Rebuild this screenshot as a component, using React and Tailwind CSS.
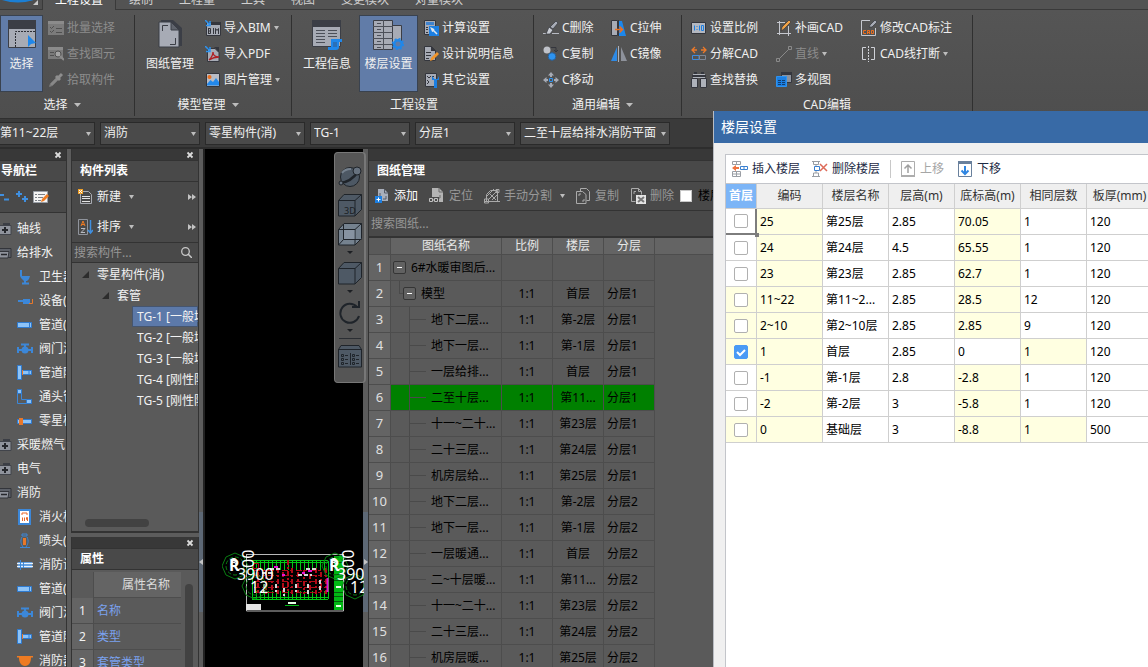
import React from 'react';

/* ---------- shared bits ---------- */

const Svg = ({ w = 16, h = 16, className = '', children }) => (
  <svg width={w} height={h} viewBox={`0 0 ${w} ${h}`} fill="none" aria-hidden="true" className={`block shrink-0 ${className}`}>
    {children}
  </svg>
);

const Caret = ({ size = 5, className = '' }) => (
  <svg width={size} height="4" viewBox="0 0 6 4" preserveAspectRatio="none" aria-hidden="true" className={`block shrink-0 ${className}`}>
    <path d="M0 0h6L3 4z" fill="#bdbdbd" />
  </svg>
);

const CloseIcon = () => (
  <Svg w={8} h={8}>
    <path d="M1.500 1.500l5 5M6.500 1.500l-5 5" stroke="#dcdcdc" strokeWidth="1.800" />
  </Svg>
);

/* ---------- ribbon icons ---------- */

const icons = {
  select: (
    <Svg w={28} h={28}>
      <path d="M.5.5h27v27H.5z" fill="#a7abb5" stroke="#3b3e46" />
      <path d="M0 0h28v9H0z" fill="#3b3e46" />
      <path d="M7.500 27V11.500H27" stroke="#2c2e35" strokeDasharray="2 1" />
      <path d="M20 15v12l3-3 5-1z" fill="#1f87ea" />
    </Svg>
  ),
  drawings: (
    <Svg w={24} h={28}>
      <path d="M3 0h12l9 8v18H7z" fill="#3b3e46" />
      <path d="M1 2h12l8 8v17H1z" fill="#a7abb5" stroke="#3b3e46" />
      <path d="M13 2v8h8z" fill="#60646d" stroke="#3b3e46" />
      <path d="M4.500 11V5.500H10M17.500 18v6.500H12" stroke="#3b3e46" />
    </Svg>
  ),
  info: (
    <Svg w={30} h={30}>
      <path d="M.5.5h28v26H.5z" fill="#a7abb5" stroke="#3b3e46" />
      <path d="M0 0h29v7H0z" fill="#3b3e46" />
      <path d="M4 10.500h9M16 10.500h9M4 13.500h9M16 13.500h9M4 16.500h9M16 16.500h9M4 19.500h9M4 22.500h9" stroke="#4c5059" />
      <path d="M19 19h11v3h-3v5c0 2-1 3-3 3h-8v-3h3z" fill="#1f87ea" />
      <path d="M21 22h4v5h-4z" fill="#2a70b8" />
    </Svg>
  ),
  floors: (
    <Svg w={31} h={30}>
      <path d="M19.500 5.500h9v20h-9z" fill="#a7abb5" stroke="#3b3e46" />
      <path d="M.5.5h19v29H.5z" fill="#a7abb5" stroke="#3b3e46" />
      <path d="M10.500 0v30M0 6.500h20M0 12.500h20M0 18.500h20M0 24.500h20M4 3.500h4M4 9.500h4M4 15.500h4M4 21.500h4M4 27.500h4" stroke="#4c5059" />
      <circle cx="25" cy="24" r="3.800" fill="#617ca8" stroke="#1f87ea" strokeWidth="2.600" />
      <circle cx="25" cy="24" r="5.400" stroke="#1f87ea" strokeWidth="1.400" strokeDasharray="2 2.240" />
    </Svg>
  ),
  batch: (
    <Svg>
      <path d="M0 1h16v14H0z" fill="#7b7b7b" />
      <path d="M2 7l1.500 1.500L6 6M2 11l1.500 1.500L6 10M8 8.500h6M8 12.500h6" stroke="#505050" />
      <path d="M0 1h16v3H0z" fill="#8b8b8b" />
    </Svg>
  ),
  find: (
    <Svg>
      <path d="M0 1h15v12H0z" fill="#7b7b7b" />
      <path d="M0 1h15v3H0z" fill="#8b8b8b" />
      <path d="M2 6.500h4M2 9.500h4" stroke="#505050" />
      <circle cx="10" cy="8" r="3" fill="#a4a4a4" stroke="#505050" />
      <path d="M12 10l4 4" stroke="#8b8b8b" strokeWidth="2" />
    </Svg>
  ),
  pick: (
    <Svg>
      <path d="M1.500 14.500l1-3L9 5l2 2-6.500 6.500z" fill="#888" stroke="#777" />
      <path d="M8 4l4 4M10 6l4-4" stroke="#8e8e8e" strokeWidth="3" />
    </Svg>
  ),
  bim: (
    <Svg>
      <path d="M1.500 2.500h14v13h-14z" fill="#a7abb5" stroke="#34363d" />
      <path d="M6 2h10v3H6z" fill="#34363d" />
      <path d="M3.500 14V8M3.500 8.500h2v5h-2M3.500 11h2M8.500 8v6M10.500 14V8.500l1.500 2 1.500-2V14" stroke="#34363d" />
      <path d="M0 0l5 5M5 1v4.500H1" stroke="#2d93f0" strokeWidth="1.500" />
    </Svg>
  ),
  pdf: (
    <Svg>
      <path d="M2.500 2.500H10l4 4v9H2.500z" fill="#a7abb5" stroke="#34363d" />
      <path d="M9 1l5 5v-5z" fill="#34363d" />
      <path d="M4 14c2-2 4-5 4-8 0 3 2 5 6 5-4 0-7 1-10 3z" stroke="#b01f24" strokeWidth="1.300" />
      <path d="M0 0l5 5M5 1v4.500H1" stroke="#2d93f0" strokeWidth="1.500" />
    </Svg>
  ),
  image: (
    <Svg>
      <path d="M1.500 1.500h13v13h-13z" fill="#b9bcc4" stroke="#34363d" />
      <circle cx="4.500" cy="5" r="2" fill="#ec6f1e" />
      <path d="M2 12l3.500-4L8 10l3-4 3 4v3.500H2z" fill="#2389ec" />
    </Svg>
  ),
  calc: (
    <Svg>
      <path d="M1.500.5h11v14h-11z" fill="#a7abb5" stroke="#34363d" />
      <path d="M3 2h8v3H3z" fill="#3f83cf" />
      <path d="M3 7.500h2M3 9.500h2M3 12.500h2" stroke="#34363d" />
      <path d="M6 6h10v10H6z" fill="#1c7fe2" />
      <path d="M9 9l5 5M8.500 8.500l2 1v1l-1 .5z" stroke="#dfe6ef" strokeWidth="1.500" />
    </Svg>
  ),
  design: (
    <Svg>
      <path d="M1.500.5h7l4 4v10h-11z" fill="#a7abb5" stroke="#34363d" />
      <path d="M8 0v5h5z" fill="#34363d" />
      <path d="M3 6.500h5M3 9.500h5M3 12.500h3" stroke="#34363d" />
      <path d="M7 15l1-3 6-6 2 2-6 6z" fill="#f2952a" />
    </Svg>
  ),
  other: (
    <Svg>
      <path d="M2.500 1.500h11v13h-11z" fill="#a7abb5" stroke="#34363d" />
      <path d="M4 4l2 2 2-2M4 8l2 2M4 12l2-2M9 4.500h2" stroke="#34363d" />
      <path d="M9 4v4h2v8h3V8h2V4l-1.500 3h-3z" fill="#1c7fe2" />
    </Svg>
  ),
  erase: (
    <Svg>
      <path d="M0 13.500h3M9 13.500h7" stroke="#b7bac2" />
      <path d="M13 1l2 2-5 6-3-2z" fill="#a7abb5" stroke="#34363d" strokeWidth=".7" />
      <path d="M6 7l4 3-3 4H3z" fill="#c9ccd3" stroke="#34363d" strokeWidth=".7" />
    </Svg>
  ),
  copy: (
    <Svg>
      <circle cx="4" cy="4" r="3.500" fill="#bfc2c9" />
      <circle cx="9" cy="10.500" r="3.800" fill="#2d93f0" stroke="#2a5f96" />
      <path d="M8 1.500h5V6M11 4l2 2 2-2" stroke="#34363d" />
    </Svg>
  ),
  move: (
    <Svg>
      <path d="M8 0l3 3.500H9V5H7V3.500H5zM8 16l3-3.500H9V11H7v1.500H5zM0 8l3.500-3v2H5v2H3.500v2zM16 8l-3.500-3v2H11v2h1.500v2z" fill="#a7abb5" />
      <path d="M6.500 6.500h3v3h-3z" stroke="#2d93f0" />
    </Svg>
  ),
  stretch: (
    <Svg>
      <path d="M8 1h3l4 15H8z" fill="#1c87ec" />
      <path d="M.5.5h6v15h-6z" fill="#a7abb5" stroke="#34363d" />
      <path d="M7.500 0v16" stroke="#34363d" />
      <path d="M4 9.500h7M8.500 6.500l3 3-3 3" stroke="#ec6f1e" strokeWidth="1.500" />
    </Svg>
  ),
  mirror: (
    <Svg>
      <path d="M6 1v14H0z" fill="#2d8ae6" />
      <path d="M10 1v14h6z" fill="#8e929b" />
      <path d="M7.500 0v16" stroke="#aeb1b9" />
    </Svg>
  ),
  scale: (
    <Svg>
      <path d="M.5 2.500h14v11H.5z" fill="#b4b8c0" stroke="#34363d" />
      <path d="M3.500 5.500v5M8.500 5.500v5M10.500 5.500h2v5h-2zM6 6v1M6 9v1" stroke="#1c7fe2" />
    </Svg>
  ),
  explode: (
    <Svg>
      <path d="M1 4h5M4 1L1 4l3 3M15 4h-5M12 1l3 3-3 3" stroke="#ec7a2a" strokeWidth="1.300" />
      <path d="M1.500 9.500H8v4H1.500z" stroke="#3d8be0" />
      <path d="M8.500 9.500h6v4h-6z" stroke="#7e8796" />
    </Svg>
  ),
  replace: (
    <Svg>
      <path d="M3 0h3v3H3zM10 0h3v3h-3zM1 3h14v2H1z" fill="#34363d" />
      <path d="M.5 6.500h6v9h-6zM9.500 6.500h6v9h-6z" fill="#aeb2ba" stroke="#34363d" />
      <path d="M2 2.500h12M2 5.500h12" stroke="#aeb2ba" />
    </Svg>
  ),
  draw: (
    <Svg>
      <path d="M3.500 1v14M12.500 6v10M1 2.500h8M1 13.500h14" stroke="#c6c8cf" />
      <path d="M5 11l1-4 7-7 2 2-7 7z" fill="#f0a145" stroke="#34363d" strokeWidth=".7" />
    </Svg>
  ),
  line: (
    <Svg>
      <path d="M2 14L14 2" stroke="#8a8a8a" />
      <path d="M.5 12.500h3v3h-3zM12.500.5h3v3h-3z" fill="#535353" stroke="#8a8a8a" />
    </Svg>
  ),
  views: (
    <Svg>
      <path d="M5.500.5h10v10h-10z" fill="#8d929c" stroke="#34363d" />
      <path d="M5 0h11v3H5z" fill="#34363d" />
      <path d="M.5 4.500h10v10H.5z" fill="#1c7fe2" stroke="#2d93f0" />
      <path d="M2 8.500h3M6 8.500h3M2 10.500h3M6 10.500h3M2 12.500h3M6 12.500h3" stroke="#123f70" />
    </Svg>
  ),
  note: (
    <Svg>
      <path d="M9 .5H.5v15h14V8" stroke="#c6c8cf" />
      <path d="M8 7l1-2 5-5 2 2-5 5z" fill="#a7abb5" stroke="#34363d" strokeWidth=".7" />
      <path d="M5 10.500H2.500v3H5M6.500 14v-3.500h2V14M6.500 12.500h2M10.500 10.500v3h2v-3z" stroke="#ec6f1e" />
    </Svg>
  ),
  breakLine: (
    <Svg>
      <path d="M5 1.500H1.500v12H5M10 1.500h3.500v12H10" stroke="#d0d2d8" />
      <path d="M7.500 0v16" stroke="#d0d2d8" strokeDasharray="2 1" />
    </Svg>
  ),
};

/* ---------- ribbon ---------- */

const tabs = ['绘制', '工程量', '工具', '视图', '变更模块', '对量模块'];

const SmallButton = ({ icon, children, caret, disabled }) => (
  <button
    type="button"
    disabled={disabled}
    className={`flex h-[26px] items-center gap-[3px] whitespace-nowrap ${disabled ? 'text-[#8c8c8c]' : 'text-[#f0f0f0]'}`}
  >
    {icons[icon]}
    <span>{children}</span>
    {caret && <Caret />}
  </button>
);

const BigButton = ({ icon, children, active, className }) => (
  <button
    type="button"
    className={`flex h-[77px] shrink-0 flex-col items-center border pt-1 text-[#f0f0f0] ${active ? 'border-[#39424f] bg-[#617ca8]' : 'border-transparent'} ${className}`}
  >
    <span className="flex h-[30px] items-start">{icons[icon]}</span>
    <span className="mt-1.5 leading-4">{children}</span>
  </button>
);

const Group = ({ label, caret, className, children }) => (
  <section className={`flex shrink-0 flex-col border-r border-[#303030] ${className}`}>
    <div className="flex">{children}</div>
    <div className={`flex h-6 items-center justify-center gap-1.5 text-[#f0f0f0] ${caret ? 'pr-2.5' : ''}`}>
      {label}
      {caret && <Caret size={7} />}
    </div>
  </section>
);

const Ribbon = () => (
  <header className="shrink-0">
    <nav className="flex h-2.5 items-end overflow-hidden bg-[#4e4e4e] leading-4 text-[#d0d0d0]">
      <div className="flex h-2.5 w-[42px] items-start justify-between border-b border-[#3a3a3a] pr-1">
        <svg width="36" height="3" aria-hidden="true"><path d="M2 0h32q-16 5-32 0z" fill="#1b7fd4" /></svg>
        <svg width="5" height="5" aria-hidden="true"><path d="M5 0v5H0z" fill="#c8c8c8" /></svg>
      </div>
      <a href="#" className="w-[74px] border-x border-[#3a3a3a] bg-[#555555] pb-0.5 text-center text-white">工程设置</a>
      <div className="flex flex-1 gap-[26px] border-b border-[#3a3a3a] bg-[#535353] pb-px pl-[13px]">
        {tabs.map((t) => (
          <a key={t} href="#">{t}</a>
        ))}
      </div>
    </nav>
    <div className="flex h-[109px] overflow-hidden border-b border-[#303030] bg-linear-to-b from-[#555555] to-[#4e4e4e] pt-[5px] pb-0.5">
      <Group label="选择" caret className="w-[135px]">
        <BigButton icon="select" active className="w-[43px]">选择</BigButton>
        <div className="ml-[5px]">
          <SmallButton icon="batch" disabled>批量选择</SmallButton>
          <SmallButton icon="find" disabled>查找图元</SmallButton>
          <SmallButton icon="pick" disabled>拾取构件</SmallButton>
        </div>
      </Group>
      <Group label="模型管理" caret className="w-[157px]">
        <BigButton icon="drawings" className="w-[70px]">图纸管理</BigButton>
        <div>
          <SmallButton icon="bim" caret>导入BIM</SmallButton>
          <SmallButton icon="pdf">导入PDF</SmallButton>
          <SmallButton icon="image" caret>图片管理</SmallButton>
        </div>
      </Group>
      <Group label="工程设置" className="w-[242px] pl-[3px]">
        <BigButton icon="info" className="w-16">工程信息</BigButton>
        <BigButton icon="floors" active className="w-[59px]">楼层设置</BigButton>
        <div className="ml-[5px]">
          <SmallButton icon="calc">计算设置</SmallButton>
          <SmallButton icon="design">设计说明信息</SmallButton>
          <SmallButton icon="other">其它设置</SmallButton>
        </div>
      </Group>
      <Group label="通用编辑" caret className="w-[148px]">
        <div className="ml-[9px] w-[68px]">
          <SmallButton icon="erase">C删除</SmallButton>
          <SmallButton icon="copy">C复制</SmallButton>
          <SmallButton icon="move">C移动</SmallButton>
        </div>
        <div>
          <SmallButton icon="stretch">C拉伸</SmallButton>
          <SmallButton icon="mirror">C镜像</SmallButton>
        </div>
      </Group>
      <Group label="CAD编辑" className="w-[291px]">
        <div className="ml-[9px] w-[85px]">
          <SmallButton icon="scale">设置比例</SmallButton>
          <SmallButton icon="explode">分解CAD</SmallButton>
          <SmallButton icon="replace">查找替换</SmallButton>
        </div>
        <div className="w-[85px]">
          <SmallButton icon="draw">补画CAD</SmallButton>
          <SmallButton icon="line" disabled caret>直线</SmallButton>
          <SmallButton icon="views">多视图</SmallButton>
        </div>
        <div>
          <SmallButton icon="note">修改CAD标注</SmallButton>
          <SmallButton icon="breakLine" caret>CAD线打断</SmallButton>
        </div>
      </Group>
    </div>
  </header>
);

/* ---------- filter bar ---------- */

const Combo = ({ label, value, className, pad = 'pl-[3px]' }) => (
  <div className={`relative h-[23px] shrink-0 ${className}`}>
    <select aria-label={label} defaultValue={value} className={`h-full w-full appearance-none border border-[#2a2a2a] bg-[#4a4a4a] pr-3 text-[#f0f0f0] ${pad}`}>
      <option>{value}</option>
    </select>
    <Caret className="pointer-events-none absolute top-2.5 right-1" />
  </div>
);

const FilterBar = () => (
  <div className="flex h-[30px] shrink-0 items-center gap-[5px] border-b-2 border-[#2d2d2d] bg-[#3a3a3a]">
    <Combo label="楼层" value="第11~22层" className="w-[95px]" pad="border-l-0 pl-0" />
    <Combo label="专业" value="消防" className="w-[100px]" />
    <Combo label="构件类型" value="零星构件(消)" className="w-[100px]" />
    <Combo label="构件" value="TG-1" className="w-[100px]" />
    <Combo label="分层" value="分层1" className="w-[100px]" />
    <Combo label="图纸" value="二至十层给排水消防平面" className="w-[150px]" />
  </div>
);

/* ---------- panels ---------- */

const PanelHead = ({ title, closable, className = 'pl-2' }) => (
  <>
    <div className="flex h-[11px] shrink-0 items-center justify-end bg-[#383838] pr-1">
      {closable && <button type="button" aria-label={`关闭${title}`}><CloseIcon /></button>}
    </div>
    <h2 className={`flex h-[22px] shrink-0 items-center overflow-hidden border-y border-[#333] bg-[#494949] font-bold whitespace-nowrap text-white ${className}`}>{title}</h2>
  </>
);

const FolderIcon = ({ open }) => (
  <Svg w={12} h={12}>
    {open ? (
      <>
        <path d="M-1 1.500h12v9H-1z" fill="#5c6068" stroke="#33353b" />
        <path d="M-1 4.500H9l-1 6.500H-1z" fill="#8f939c" stroke="#33353b" />
        <path d="M1 7.500h6" stroke="#25272c" strokeWidth="1.500" />
      </>
    ) : (
      <>
        <path d="M3 0h7v3H3z" fill="#3b3e45" />
        <path d="M-1 2.500h12v9H-1z" fill="#8f939c" stroke="#41444b" />
        <path d="M2 7h6M5 4v6" stroke="#25272c" strokeWidth="2" />
      </>
    )}
  </Svg>
);

const navIcons = {
  toilet: (
    <>
      <path d="M3 1h2v6H3zM3 7h10l-1 3-2 2H7l-3-3z" fill="#3c87d8" />
      <path d="M8 12v2M5 14.500h7" stroke="#3c87d8" strokeWidth="2" />
    </>
  ),
  device: (
    <>
      <path d="M1 8h6" stroke="#3c87d8" strokeWidth="2" />
      <path d="M6 6h7v5H6z" fill="#3c87d8" />
      <path d="M12 10.500h3.500V6" stroke="#e8782a" />
    </>
  ),
  pipe: (
    <>
      <path d="M.5 5.500h14v5H.5z" fill="#8dc3f7" stroke="#2f7bd0" />
      <path d="M12.500 6v4" stroke="#2f7bd0" />
    </>
  ),
  valve: (
    <>
      <path d="M1 6v6M15 6v6M1 9h14M4 3.500h8M8 3v4" stroke="#3c87d8" strokeWidth="2" />
      <circle cx="8" cy="9" r="3.500" fill="#3c87d8" />
    </>
  ),
  tee: (
    <>
      <path d="M4 5.500h10.500v4H4z" fill="#8dc3f7" stroke="#2f7bd0" />
      <path d="M.5.5h4v14h-4z" fill="#8dc3f7" stroke="#2f7bd0" />
      <path d="M5.500 5v5" stroke="#e8782a" />
      <path d="M12 5v5" stroke="#2f7bd0" />
    </>
  ),
  elbow: (
    <>
      <path d="M.5 2v12.500H13M4.500 4v6.500H10" stroke="#3c87d8" />
      <path d="M.5.5h4v4h-4zM9.500 10.500h5v4h-5z" fill="#8dc3f7" stroke="#2f7bd0" />
    </>
  ),
  sleeve: (
    <>
      <path d="M.5 6.500h14v4H.5z" fill="#8dc3f7" stroke="#2f7bd0" />
      <path d="M2 5h4v7H2z" fill="#e8782a" />
    </>
  ),
  hydrant: (
    <>
      <path d="M2 1h11v14H2z" fill="#fff" stroke="#3c87d8" strokeWidth="2" />
      <path d="M5 6V4h5v2M5.500 8.500V12M7.500 8.500V12M10.500 12V8.500h-1v2h1" stroke="#e8672a" />
    </>
  ),
  sprinkler: (
    <>
      <path d="M5 1h5v2H5zM3 14.500h10M5 4C3 8 4 11 6 14M10 4c2 4 1 7-1 10" stroke="#3c87d8" />
      <path d="M6 5h3v7H6z" fill="#e8782a" />
    </>
  ),
  fireDevice: (
    <>
      <path d="M1 5h14v6H1z" fill="#3c87d8" />
      <path d="M0 6.500h6M10 6.500h6M0 9.500h6M10 9.500h6M7 6.500h3M7 9.500h3" stroke="#e6f2ff" strokeWidth="1.500" />
      <path d="M3.500 3v10" stroke="#3c87d8" />
    </>
  ),
  alarm: <path d="M0 3h16v1.500h-2C14 9 12 13 8 13S2 9 2 4.500H0z" fill="#ee7b22" />,
};

const navTree = [
  { label: '轴线' },
  { label: '给排水', open: true },
  { label: '卫生器具(水)', icon: 'toilet' },
  { label: '设备(水)', icon: 'device' },
  { label: '管道(水)', icon: 'pipe' },
  { label: '阀门法兰(水)', icon: 'valve' },
  { label: '管道附件(水)', icon: 'tee' },
  { label: '通头管件(水)', icon: 'elbow' },
  { label: '零星构件(水)', icon: 'sleeve' },
  { label: '采暖燃气' },
  { label: '电气' },
  { label: '消防', open: true },
  { label: '消火栓(消)', icon: 'hydrant' },
  { label: '喷头(消)', icon: 'sprinkler' },
  { label: '消防设备(消)', icon: 'fireDevice' },
  { label: '管道(消)', icon: 'pipe' },
  { label: '阀门法兰(消)', icon: 'valve' },
  { label: '管道附件(消)', icon: 'tee' },
  { label: '消防器具(消)', icon: 'alarm' },
];

const NavPanel = () => (
  <aside className="flex w-[67px] shrink-0 flex-col overflow-hidden border-r border-[#333] bg-[#5a5a5a] text-[#f2f2f2]">
    <PanelHead title="导航栏" closable className="pl-px" />
    <div className="flex h-[31px] shrink-0 items-center gap-[5px] border-b border-[#333] bg-[#494949]">
      <button type="button" aria-label="折叠">
        <Svg w={10} h={14}><path d="M0 5h4M4 9.500h5" stroke="#3f8fe0" strokeWidth="2" /></Svg>
      </button>
      <button type="button" aria-label="展开">
        <Svg w={13} h={14}><path d="M1 4h6M4 1v6M7 9h6M10 6v6" stroke="#3f8fe0" strokeWidth="2" /></Svg>
      </button>
      <button type="button" aria-label="编辑">
        <Svg>
          <path d="M.5 2.500h14v11H.5z" fill="#f4f4f4" stroke="#9aa0a8" />
          <path d="M2 5.500h2M2 8.500h2M2 11.500h2M5 5.500h7M5 8.500h5M5 11.500h3" stroke="#7c8087" />
          <path d="M8 13l1-3 5-5 2 2-5 5z" fill="#ee7b22" />
        </Svg>
      </button>
    </div>
    <ul className="min-h-0 flex-1 overflow-hidden pt-1">
      {navTree.map((n, i) => (
        <li key={i} className={`flex h-6 items-center whitespace-nowrap ${n.icon ? 'gap-1.5 pl-[17px]' : 'gap-[5px]'}`}>
          {n.icon ? <Svg>{navIcons[n.icon]}</Svg> : <FolderIcon open={n.open} />}
          <span>{n.label}</span>
        </li>
      ))}
    </ul>
  </aside>
);

const Chevrons = () => (
  <Svg w={8} h={6}>
    <path d="M0 0l4 3-4 3zM4 0l4 3-4 3z" fill="#c4c4c4" />
  </Svg>
);

const components = ['TG-1 [一般填料套管]', 'TG-2 [一般填料套管]', 'TG-3 [一般填料套管]', 'TG-4 [刚性防水套管]', 'TG-5 [刚性防水套管]'];

const TreeArrow = () => (
  <Svg w={7} h={7}>
    <path d="M7 0v7H0z" fill="#2c2c2c" />
  </Svg>
);

const ComponentPanel = () => (
  <section className="flex min-h-0 flex-1 flex-col overflow-hidden border-x border-b-2 border-[#333] bg-[#5a5a5a] text-[#f2f2f2]">
    <PanelHead title="构件列表" closable />
    <div className="flex h-[61px] shrink-0 flex-col border-b border-[#333] bg-[#494949]">
      <div className="flex h-[30px] items-center pr-0.5 pl-1.5">
        <button type="button" className="flex items-center gap-1">
          <Svg w={15}>
            <path d="M2.500 2.500h8l3 3v9h-11z" fill="#484848" stroke="#a8abb2" />
            <path d="M4 7.500h8M4 9.500h8M4 12.500h8" stroke="#e4e4e4" />
            <path d="M0 0h5v5H0z" fill="#f0a028" />
            <path d="M1 1l3 3M4 1L1 4" stroke="#fff" />
          </Svg>
          新建
          <Caret className="ml-1" />
        </button>
        <button type="button" aria-label="更多" className="ml-auto"><Chevrons /></button>
      </div>
      <div className="flex h-[30px] items-center pr-0.5 pl-1.5">
        <button type="button" className="flex items-center gap-1">
          <Svg w={15}>
            <path d="M.5.5h9v15h-9z" stroke="#90949c" />
            <path d="M3 7l2-5 2 5M3.500 5.500h3" stroke="#ee7b22" />
            <path d="M3 9.500h4l-4 4h4" stroke="#b8bbc2" />
            <path d="M12.500 1v12M10 11l2.500 3 2.500-3" stroke="#3f8fe0" strokeWidth="1.500" />
          </Svg>
          排序
          <Caret className="ml-1" />
        </button>
        <button type="button" aria-label="更多" className="ml-auto"><Chevrons /></button>
      </div>
    </div>
    <div className="flex h-5 shrink-0 items-center border-b border-[#333] bg-[#494949] pr-1.5 pl-0.5">
      <input type="text" aria-label="搜索构件" placeholder="搜索构件..." className="min-w-0 flex-1 bg-transparent leading-4 outline-none placeholder:text-[#969696]" />
      <Svg w={11} h={11}>
        <circle cx="4.500" cy="4.500" r="3.800" stroke="#c8c8c8" strokeWidth="1.300" />
        <path d="M7 7l4 4" stroke="#c8c8c8" strokeWidth="1.500" />
      </Svg>
    </div>
    <ul className="min-h-0 flex-1 overflow-hidden pt-px whitespace-nowrap">
      <li className="flex h-[21px] items-center gap-2 pl-2.5"><TreeArrow />零星构件(消)</li>
      <li className="flex h-[21px] items-center gap-2 pl-[30px]"><TreeArrow />套管</li>
      {components.map((c, i) => (
        <li key={c} className={`ml-[60px] flex h-[21px] items-center border pl-1 ${i === 0 ? 'border-[#45556f] bg-[#5c79a9]' : 'border-transparent'}`}>{c}</li>
      ))}
    </ul>
    <div className="mb-1 ml-[13px] h-2 w-16 shrink-0 rounded-full bg-[#424242]" />
  </section>
);

const props = ['名称', '类型', '套管类型'];

const PropertyPanel = () => (
  <section className="flex h-[130px] shrink-0 flex-col overflow-hidden border-x border-[#333] bg-[#5a5a5a] text-[#f2f2f2]">
    <PanelHead title="属性" closable />
    <div className="flex min-h-0 flex-1 overflow-hidden pt-0.5">
      <div className="min-w-0 flex-1 overflow-hidden">
        <table className="w-full table-fixed border-separate border-spacing-0">
          <thead>
            <tr className="h-[26px]">
              <th className="w-[22px] border-r border-[#4d4d4d] bg-[#5a5a5a]" aria-label="序号" />
              <th className="border-b border-[#4d4d4d] bg-[#646464] pl-[17px] font-normal text-[#dcdcdc]">属性名称</th>
            </tr>
          </thead>
          <tbody>
            {props.map((p, i) => (
              <tr key={p} className="h-[26px]">
                <td className="border-r border-b border-[#4d4d4d] bg-[#646464] text-center">{i + 1}</td>
                <td className="border-b border-[#4d4d4d] pl-[3px]"><a href="#" className="text-[#7ba2ef]">{p}</a></td>
              </tr>
            ))}
          </tbody>
        </table>
      </div>
      <div className="flex w-[17px] pt-3 pl-1">
        <div className="w-2 rounded-t-full bg-[#424242]" />
      </div>
    </div>
  </section>
);

/* ---------- drawing canvas ---------- */

const Marker = ({ x }) => (
  <g transform={`translate(${x} 0)`}>
    <g stroke="#0a7d14" fill="none">
      <path d="M13 13l9 4 4 9-4 9-9 4-9-4-4-9 4-9z" />
      <circle cx="13" cy="26" r="9" strokeDasharray="4 2" />
      <path d="M33 34l8 4 4 8-4 9-8 4-9-4-4-9 4-8z" />
      <circle cx="33" cy="46" r="9" strokeDasharray="4 2" />
    </g>
    <g fill="#fff" fontSize="16">
      <text x="7" y="31" fontWeight="bold">R</text>
      <text x="8" y="27" fontSize="13">8</text>
      <text transform="translate(32 28) rotate(-90)">00</text>
      <text x="15" y="40">3900</text>
      <text x="28" y="53">12</text>
    </g>
  </g>
);

const CadDrawing = () => (
  <svg width="142" height="76" viewBox="0 0 142 76" role="img" aria-label="平面图" className="absolute top-[391px] left-[17px]">
    <path d="M24 14.500h98M24.500 14v57h97V14" stroke="#b9b9b9" fill="none" />
    <path d="M24 64h15v6H24z" fill="#e6e6e6" />
    <g stroke="#00c814">
      <path d="M30 20.500h76M30 22.500h76M30 57.500h76M30 59.500h76M30.500 21v38M106.500 21v38" />
      <path d="M34.500 20v39M38.500 20v39M42.500 20v39M46.500 20v39M50.500 20v39M54.500 20v39M58.500 20v39M62.500 20v39M66.500 20v39M70.500 20v39M74.500 20v39M78.500 20v39M82.500 20v39M86.500 20v39M90.500 20v39M94.500 20v39M98.500 20v39M102.500 20v39" strokeDasharray="10 21 12" />
    </g>
    <g stroke="#b00a18" fill="none">
      <path d="M32 30.500h73M32 35.500h73M32 41.500h73M32 47.500h73M32 52.500h73" strokeDasharray="6 2 3 3" />
      <path d="M36 32v20M44 30v24M50 34v18M56 28v26M61 32v20M66 20v32M70 28v26M76 32v20M82 30v24M88 34v18M94 28v26M99 32v22M104 28v26" strokeDasharray="5 2 2 2" strokeWidth="2" />
      <path d="M31.500 23.500h5v5h-5z" />
    </g>
    <path d="M40 33h12M48 29h10M84 29h10M76 35h14M62 48v8M74 44v8M86 44v10M98 40v10M42 44v8M54 44v8" stroke="#d6d6d6" strokeWidth="2" strokeDasharray="4 2" />
    <path d="M52 27h4M86 31h4M60 35h3M80 33h3M105.500 38v14" stroke="#e514d6" strokeWidth="2" />
    <path d="M112 16h9v54h-9z" fill="#00b814" />
    <path d="M112 22.500h9M112 28.500h9M112 34.500h9M112 40.500h9M112 52.500h9M112 56.500h9M112 61.500h9" stroke="#045c0b" />
    <path d="M114 47h5M114 66h5M66 63h8" stroke="#e6ffe6" strokeWidth="2" />
    <path d="M63 65.500h14" stroke="#00b814" />
    <Marker x={0} />
    <Marker x={100} />
  </svg>
);

const CubeIcon = ({ label, inner }) => (
  <Svg w={24} h={23}>
    <path d="M.5 6.500L6 .5h17.500v15L17 22H.5z" fill={inner ? '#75828f' : '#4e5965'} stroke="#1f242a" />
    <path d="M.5 6.500H17V22M17 6.500l6.500-6" stroke="#1f242a" />
    {inner && <path d="M5.500 1v15.500h18M.5 22l5-5.500" stroke="#1f242a" />}
    {inner && <path d="M6 7h10.500v9H6z" fill="#8793a1" />}
    {label && <text x="6" y="20" fontSize="9" fill="#1a1e23">3D</text>}
  </Svg>
);

const DarkCaret = () => (
  <Svg w={6} h={3}>
    <path d="M0 0h6L3 3z" fill="#1c1f23" />
  </Svg>
);

const ViewTools = () => (
  <div className="absolute top-[3px] left-[129px] z-10 flex h-[231px] w-8 flex-col items-center rounded-sm border border-r-2 border-[#777] bg-[#555555] pt-3">
    <button type="button" aria-label="动态观察">
      <Svg w={24} h={23}>
        <circle cx="12" cy="12" r="9.500" fill="#4d5864" stroke="#1f242a" />
        <path d="M4 8c2-3 5-4 9-4" stroke="#76828f" strokeWidth="2" />
        <path d="M1 18c8 0 15-5 20-13" stroke="#1f242a" strokeWidth="2.500" />
        <circle cx="19" cy="6" r="4" fill="#66717e" stroke="#1f242a" />
        <circle cx="3" cy="18" r="2" fill="#66717e" stroke="#1f242a" />
      </Svg>
    </button>
    <button type="button" aria-label="三维" className="mt-[6px]"><CubeIcon label /></button>
    <button type="button" aria-label="线框" className="mt-1.5"><CubeIcon inner /></button>
    <span className="mt-[5px]"><DarkCaret /></span>
    <button type="button" aria-label="视图方向" className="mt-2"><CubeIcon /></button>
    <span className="mt-[5px]"><DarkCaret /></span>
    <button type="button" aria-label="旋转" className="mt-2">
      <Svg w={24} h={23}>
        <path d="M19 6A9.500 9.500 0 1 0 21 15M14 6h7V0" stroke="#1f242a" strokeWidth="2" />
      </Svg>
    </button>
    <span className="mt-[5px]"><DarkCaret /></span>
    <span className="my-1.5 h-px w-[22px] bg-[#2b2e33]" />
    <button type="button" aria-label="显示设置">
      <Svg w={24} h={23}>
        <path d="M.5 4.500L3 .5h18l2.500 4V22H.5z" fill="#4e5965" stroke="#1f242a" />
        <path d="M0 4.500h24M12.500 8v12M7 10.500h3M7 14.500h3M7 18.500h3M18 10.500h3M18 14.500h3M18 18.500h3" stroke="#1f242a" />
        <path d="M3.500 9.500h2v2h-2zM3.500 13.500h2v2h-2zM3.500 17.500h2v2h-2zM14.500 9.500h2v2h-2zM14.500 13.500h2v2h-2zM14.500 17.500h2v2h-2z" stroke="#1f242a" />
      </Svg>
    </button>
  </div>
);

const Splitter = ({ dir, className }) => (
  <div className={`flex shrink-0 flex-col bg-[#5c5c5c] ${className}`}>
    {dir && (
      <div className="mt-[363px] flex h-[100px] items-center justify-center bg-[#5d6875]">
        <Svg w={4} h={6}><path d={dir === 'left' ? 'M4 0v6L0 3z' : 'M0 0v6l4-3z'} fill="#c4c4c4" /></Svg>
      </div>
    )}
  </div>
);

/* ---------- drawing manager ---------- */

const sheets = [
  ['6#水暖审图后...', '', '', ''],
  ['模型', '1:1', '首层', '分层1'],
  ['地下二层...', '1:1', '第-2层', '分层1'],
  ['地下一层...', '1:1', '第-1层', '分层1'],
  ['一层给排...', '1:1', '首层', '分层1'],
  ['二至十层...', '1:1', '第11...', '分层1'],
  ['十一~二十...', '1:1', '第23层', '分层1'],
  ['二十三层...', '1:1', '第24层', '分层1'],
  ['机房层给...', '1:1', '第25层', '分层1'],
  ['地下二层...', '1:1', '第-2层', '分层2'],
  ['地下一层...', '1:1', '第-1层', '分层2'],
  ['一层暖通...', '1:1', '首层', '分层2'],
  ['二~十层暖...', '1:1', '第11...', '分层2'],
  ['十一~二十...', '1:1', '第23层', '分层2'],
  ['二十三层...', '1:1', '第24层', '分层2'],
  ['机房层暖...', '1:1', '第25层', '分层2'],
];

const Toggle = () => (
  <button type="button" aria-label="折叠" className="flex size-[13px] shrink-0 items-center justify-center rounded-xs border border-[#353535] bg-[#616161]">
    <span className="h-px w-[5px] bg-white" />
  </button>
);

const SheetName = ({ level, children }) => (
  <div className="flex h-[25px] items-center overflow-hidden whitespace-nowrap">
    {level === 0 && <span className="ml-0.5"><Toggle /></span>}
    {level === 1 && (
      <>
        <span className="ml-2 h-full w-1"><span className="block h-1/2 border-b border-l border-[#4a4a4a]" /></span>
        <Toggle />
      </>
    )}
    {level === 2 && (
      <span className="mr-[5px] ml-[18px] flex h-full w-[17px] items-center border-l border-[#4a4a4a]">
        <span className="h-px w-full bg-[#4a4a4a]" />
      </span>
    )}
    <span className={level === 2 ? '' : 'ml-[5px]'}>{children}</span>
  </div>
);

const ToolButton = ({ children, icon, active, caret }) => (
  <button type="button" disabled={!active} className={`flex shrink-0 items-center gap-1 ${active ? 'text-white' : 'text-[#989898]'}`}>
    {icon}
    {children}
    {caret && <Caret className="ml-1" />}
  </button>
);

const DrawingPanel = () => (
  <main className="flex min-w-0 flex-1 flex-col overflow-hidden border-l border-[#333] bg-[#5a5a5a]">
    <PanelHead title="图纸管理" />
    <div className="flex h-[29px] shrink-0 items-center gap-[11px] overflow-hidden border-b border-[#333] bg-[#494949] pl-1.5 whitespace-nowrap">
      <ToolButton
        active
        icon={
          <Svg w={15}>
            <path d="M3 1h6l4 4v8H3z" fill="#a9afbb" />
            <path d="M9.500 1v4H13M5 5v3M11 8v3H8" stroke="#555b66" />
            <path d="M0 8h7v7H0z" fill="#1c7fe2" />
            <path d="M1.500 11.500h4M3.500 9.500v4" stroke="#fff" />
          </Svg>
        }
      >
        添加
      </ToolButton>
      <ToolButton
        icon={
          <Svg>
            <path d="M3 0h7l4 4v10H3z" fill="#b4b4b4" />
            <path d="M10 0v4h4M11 7v3H9" stroke="#6a6a6a" />
            <path d="M0 9h10v6H0z" fill="#494949" />
            <path d="M.5 10.500h3v3h-3zM5.500 10.500h3v3h-3zM3 12h3" fill="#494949" stroke="#c0c0c0" />
          </Svg>
        }
      >
        定位
      </ToolButton>
      <ToolButton
        caret
        icon={
          <Svg>
            <path d="M2.500 13.500v-7l4-4h7v11zM0 13.500h16M2 9l8-8M5 11l8-8M8 12l5-5M5 5l7 7M.5 11h4v4h-4zM12 1.500h3v3h-3z" stroke="#aaa" />
          </Svg>
        }
      >
        手动分割
      </ToolButton>
      <ToolButton
        icon={
          <Svg w={15}>
            <path d="M4.500 3V.5h6l3 3v9h-3" stroke="#aaa" />
            <path d="M.5 3.500h6l3.500 3v9H.5zM3 8V6h2M8 11v2H6" stroke="#aaa" />
          </Svg>
        }
      >
        复制
      </ToolButton>
      <ToolButton
        icon={
          <Svg>
            <path d="M1.500.5h7l3 3v3M8.500.5v3h3M1.500.5v13h4M4 6V3.500h2" stroke="#aaa" />
            <path d="M6 7h10v9H6z" fill="#e4e4e4" />
            <path d="M8 9l6 5M14 9l-6 5" stroke="#777" strokeWidth="2" />
          </Svg>
        }
      >
        删除
      </ToolButton>
      <label className="-ml-[5px] flex shrink-0 items-center gap-1.5 text-black">
        <input type="checkbox" className="size-3 appearance-none border border-[#c8c8c8] bg-white" />
        楼层对应
      </label>
    </div>
    <div className="h-[27px] shrink-0 border-b-2 border-[#333] bg-[#494949] px-0.5">
      <input type="text" aria-label="搜索图纸" placeholder="搜索图纸..." className="h-6 w-full bg-transparent outline-none placeholder:text-[#969696]" />
    </div>
    <div className="min-h-0 flex-1 overflow-hidden">
      <table className="w-full table-fixed border-separate border-spacing-0 text-black">
        <thead>
          <tr className="h-[17px] bg-[#646464] leading-4 text-[#e8e8e8] *:border-r *:border-b *:border-[#4d4d4d] *:font-normal">
            <th className="w-[22px] bg-[#5a5a5a]" aria-label="序号" />
            <th className="w-[111px]">图纸名称</th>
            <th className="w-[51px]">比例</th>
            <th className="w-[51px]">楼层</th>
            <th className="w-[51px]">分层</th>
            <th aria-label="空" />
          </tr>
        </thead>
        <tbody>
          {sheets.map(([name, scale, floor, layer], i) => (
            <tr key={i} className={`h-[26px] *:border-r *:border-b *:border-[#4d4d4d] ${i === 5 ? '*:bg-[#008000]' : ''}`}>
              <th scope="row" className="bg-[#646464]! text-[13px] font-normal text-[#e0e0e0]">{i + 1}</th>
              <td><SheetName level={Math.min(i, 2)}>{name}</SheetName></td>
              <td className="text-center">{scale}</td>
              <td className="text-center">{floor}</td>
              <td className="pl-[3px]">{layer}</td>
              <td className="border-0! bg-[#5a5a5a]!" />
            </tr>
          ))}
        </tbody>
      </table>
    </div>
  </main>
);

/* ---------- floor dialog ---------- */

const floors = [
  { code: '25', name: '第25层', height: '2.85', base: '70.05', same: '1', slab: '120' },
  { code: '24', name: '第24层', height: '4.5', base: '65.55', same: '1', slab: '120' },
  { code: '23', name: '第23层', height: '2.85', base: '62.7', same: '1', slab: '120' },
  { code: '11~22', name: '第11~2...', height: '2.85', base: '28.5', same: '12', slab: '120', lockFirst: true },
  { code: '2~10', name: '第2~10层', height: '2.85', base: '2.85', same: '9', slab: '120', lockFirst: true },
  { code: '1', name: '首层', height: '2.85', base: '0', same: '1', slab: '120', lockFirst: true, lockSame: true, first: true },
  { code: '-1', name: '第-1层', height: '2.8', base: '-2.8', same: '1', slab: '120' },
  { code: '-2', name: '第-2层', height: '3', base: '-5.8', same: '1', slab: '120' },
  { code: '0', name: '基础层', height: '3', base: '-8.8', same: '1', slab: '500', lockFirst: true, lockSame: true },
];

const FirstFloorCheck = ({ floor }) => (
  <label className="relative mx-auto block size-[14px]">
    <input
      type="checkbox"
      aria-label={`${floor.name} 设为首层`}
      defaultChecked={floor.first}
      className="peer block size-[14px] appearance-none rounded-xs border border-[#b0b0b0] bg-white checked:border-[#4a9bf5] checked:bg-[#4a9bf5]"
    />
    <svg width="14" height="14" viewBox="0 0 14 14" fill="none" aria-hidden="true" className="pointer-events-none absolute inset-0 hidden peer-checked:block">
      <path d="M3 7l3 3 5-5" stroke="#fff" strokeWidth="2" />
    </svg>
  </label>
);

const FloorDialog = () => (
  <div role="dialog" aria-label="楼层设置" className="absolute top-[111px] right-0 bottom-0 left-[713px] z-20 flex flex-col overflow-hidden border-l border-[#b9bcc2] bg-[#f0f0f0]">
    <h1 className="-ml-px flex h-8 shrink-0 items-center bg-[#386aa6] pl-2 text-sm text-white">楼层设置</h1>
    <div className="mt-[11px] ml-[11px] min-h-0 flex-1 overflow-hidden border-t border-l border-[#c3c5ca] bg-white">
      <div className="flex h-[29px] items-center border-b border-[#c3c5ca] pl-1.5 text-[#1d2a44]">
        <button type="button" className="flex items-center gap-1">
          <Svg>
            <path d="M.5.500h8v3h-8zM4.500.5V4M.5 10.500h8v5h-8zM4.500 10v5M0 13h8" stroke="#9a9ea4" />
            <path d="M8.500 5.500h7v3h-7zM12 5.500v3" stroke="#3a80d0" />
            <path d="M0 7l4-3v2h3v2H4v2z" fill="#ee7440" />
          </Svg>
          插入楼层
        </button>
        <button type="button" className="ml-3 flex items-center gap-1">
          <Svg>
            <path d="M0 .5h8M1.500.5v3h5v-3M0 15.500h8M1.500 15v-3h5v3M4 3v2M4 10v2" stroke="#9a9ea4" />
            <path d="M2.500 5.500h5v4h-5z" stroke="#3a80d0" />
            <path d="M8 3l7 7M15 3l-7 7" stroke="#dd6a58" strokeWidth="1.500" />
          </Svg>
          删除楼层
        </button>
        <span className="mx-2.5 h-[18px] w-px bg-[#c8c8c8]" />
        <button type="button" disabled className="flex items-center gap-[5px] text-[#a6a6a6]">
          <Svg w={14}>
            <path d="M.5.5h13v14H.5z" stroke="#adadad" />
            <path d="M0 14h14v2H0z" fill="#adadad" />
            <path d="M7 12V4M3.500 7.500L7 4l3.500 3.500" stroke="#a0a0a0" strokeWidth="1.500" />
          </Svg>
          上移
        </button>
        <button type="button" className="ml-3.5 flex items-center gap-[5px]">
          <Svg w={14}>
            <path d="M.5.5h13v15H.5z" stroke="#69809c" />
            <path d="M0 0h14v3H0z" fill="#69809c" />
            <path d="M7 5v8M3.500 9.500L7 13l3.500-3.500" stroke="#2f86e2" strokeWidth="2" />
          </Svg>
          下移
        </button>
      </div>
      <table className="w-full table-fixed border-separate border-spacing-0 text-black">
        <thead>
          <tr className="h-[25px] bg-[#efefef] text-[#333] *:border-r *:border-b *:border-[#cfcfcf] *:font-normal">
            <th className="w-[31px] bg-[#7cb5f7] font-bold! text-white">首层</th>
            <th className="w-[66px]">编码</th>
            <th className="w-[66px]">楼层名称</th>
            <th className="w-[66px]">层高(m)</th>
            <th className="w-[66px]">底标高(m)</th>
            <th className="w-[66px]">相同层数</th>
            <th className="border-r-0! pl-1 whitespace-nowrap">板厚(mm)</th>
          </tr>
        </thead>
        <tbody>
          {floors.map((f, i) => (
            <tr key={f.code} className="h-[26px] *:border-r *:border-b *:border-[#cfcfcf] *:whitespace-nowrap">
              <td className={`${f.lockFirst ? 'bg-[#ffffe1]' : ''} ${i === 0 ? 'relative border-r-2! border-b-2! border-[#7d7d7d]!' : ''}`}>
                <FirstFloorCheck floor={f} />
                {i === 0 && <span className="absolute -right-1 -bottom-1 size-1 bg-[#7d7d7d]" />}
              </td>
              <td className="bg-[#ffffe1] pl-[3px]">{f.code}</td>
              <td className="pl-[3px]">{f.name}</td>
              <td className="pl-[3px]">{f.height}</td>
              <td className={`pl-[3px] ${f.first ? '' : 'bg-[#ffffe1]'}`}>{f.base}</td>
              <td className={`pl-[3px] ${f.lockSame ? 'bg-[#ffffe1]' : ''}`}>{f.same}</td>
              <td className="border-r-0! pl-[3px]">{f.slab}</td>
            </tr>
          ))}
        </tbody>
      </table>
    </div>
  </div>
);

const App = () => (
  <div className="relative flex h-screen flex-col overflow-hidden bg-[#3a3a3a] font-['Noto_Sans','Noto_Sans_CJK_SC',sans-serif] text-xs">
    <Ribbon />
    <FilterBar />
    <div className="flex min-h-0 flex-1">
      <NavPanel />
      <Splitter className="w-1" />
      <div className="flex w-32 shrink-0 flex-col bg-[#5c5c5c]">
        <ComponentPanel />
        <div className="h-1 shrink-0" />
        <PropertyPanel />
      </div>
      <Splitter dir="left" className="w-1.5 border-r-2 border-[#222]" />
      <div className="relative w-[158px] shrink-0 bg-black">
        <CadDrawing />
        <ViewTools />
      </div>
      <Splitter dir="right" className="w-[5px]" />
      <DrawingPanel />
    </div>
    <FloorDialog />
  </div>
);

export default App;
